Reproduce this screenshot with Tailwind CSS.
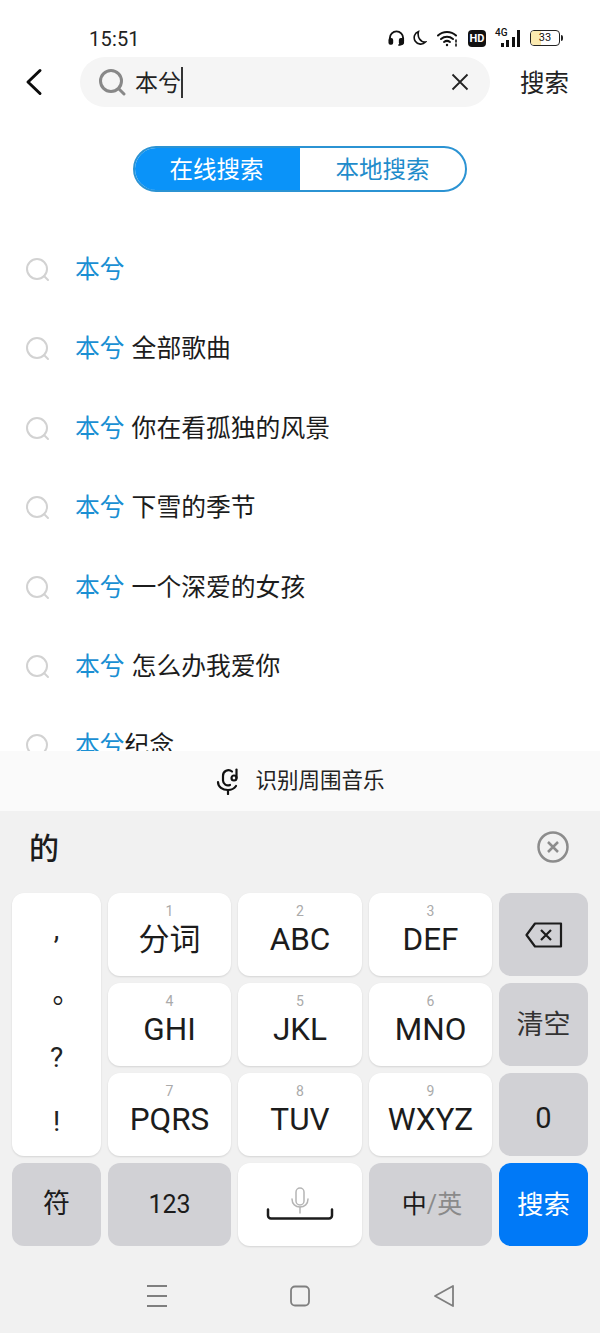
<!DOCTYPE html>
<html lang="zh-CN">
<head>
    <meta charset="UTF-8">
    <meta name="viewport" content="width=device-width, initial-scale=1.0">
    <title>搜索</title>
    <script src="https://cdn.jsdelivr.net/npm/@tailwindcss/browser@4"></script>
</head>
<body class="bg-white font-['Roboto','Noto_Sans_CJK_SC',sans-serif] text-[#1c1c1c]">
<div class="w-[600px] h-[1333px] flex flex-col overflow-hidden">

    <!-- status bar -->
    <div class="h-[57px] shrink-0 pl-[89px] pr-[37px] pt-[26px] flex items-start justify-between">
        <span class="mt-[1px] text-[20px] leading-6 tracking-[0.2px] text-[#222]">15:51</span>
        <div class="flex items-start pt-[4px]">
            <svg width="17" height="17" viewBox="0 0 18 17" fill="none" stroke="#111" stroke-width="2"><path d="M2 11V8a7 7 0 0 1 14 0v3"/><rect x="1.5" y="9" width="3" height="5" rx="1" fill="#111"/><path d="M16 11c0 3-2 4.500-5 4.500"/><rect x="12.500" y="9" width="3.500" height="5" rx="1" fill="#111"/></svg>
            <svg class="ml-[7px]" width="15" height="16" viewBox="0 0 15 16" fill="none" stroke="#111" stroke-width="1.600"><path d="M6.500 1.500a6.500 6.500 0 1 0 7 10.500C8.500 12.500 5 7 6.500 1.500z"/></svg>
            <svg class="ml-[10px]" width="22" height="17" viewBox="0 0 22 17" fill="none" stroke="#111" stroke-width="2" stroke-linecap="round"><path d="M1 5.500C6 .8 14 .8 19 5.500"/><path d="M4 9c3.500-3 8.500-3 12 0"/><path d="M7 12c2-1.500 4-1.500 6 0"/><circle cx="10" cy="15" r="1.200" fill="#111" stroke="none"/><path d="M19 10v2M19 14v2" stroke-width="1.600"/></svg>
            <div class="ml-[9px] w-[18px] h-[17px] rounded-[4px] bg-[#111] text-white text-[11px] leading-[17px] font-bold text-center">HD</div>
            <div class="ml-[9px] relative w-[25px] h-[17px]">
                <span class="absolute left-0 top-[-3px] text-[10px] leading-[11px] font-medium text-[#111]">4G</span>
                <div class="absolute right-0 bottom-0 flex items-end gap-[2.500px]">
                    <div class="w-[3px] h-[4px] bg-[#111]"></div>
                    <div class="w-[3px] h-[7px] bg-[#111]"></div>
                    <div class="w-[3px] h-[10px] bg-[#111]"></div>
                    <div class="w-[3px] h-[17px] bg-[#111]"></div>
                </div>
            </div>
            <div class="ml-[10px] flex items-center h-[16px]">
                <div class="w-[30px] h-[16px] rounded-[4px] border-[1.500px] border-[#222] overflow-hidden relative bg-white">
                    <div class="absolute inset-y-0 left-0 w-[10px] bg-[#fbeab0]"></div>
                    <div class="relative text-[11px] leading-[13px] text-center text-[#111]">33</div>
                </div>
                <div class="ml-[1px] w-[2px] h-[6px] rounded-r-sm bg-[#222]"></div>
            </div>
        </div>
    </div>

    <!-- search header -->
    <div class="h-[50px] shrink-0 flex items-center">
        <div class="w-[80px] pl-[24px] shrink-0">
            <svg width="20" height="28" viewBox="0 0 20 28" fill="none" stroke="#0c0c0c" stroke-width="3" stroke-linecap="round" stroke-linejoin="round"><path d="M16 2.500 4 14l12 11.500"/></svg>
        </div>
        <div class="w-[410px] h-[50px] shrink-0 rounded-full bg-[#f5f5f5] flex items-center pl-[18px] pr-[21px]">
            <svg width="28" height="28" viewBox="0 0 28 28" fill="none" stroke="#888" stroke-width="3" stroke-linecap="round"><circle cx="13" cy="13" r="10.500"/><path d="M21 21l5 5"/></svg>
            <span class="ml-[9px] mt-[4px] text-[23px] leading-8 text-[#222]">本兮</span>
            <div class="w-[1.500px] h-[31px] bg-[#333]"></div>
            <svg class="ml-auto" width="18" height="18" viewBox="0 0 18 18" fill="none" stroke="#222" stroke-width="1.800"><path d="M1.500 1.500l15 15M16.500 1.500l-15 15"/></svg>
        </div>
        <span class="ml-[30px] mt-[4px] text-[24.500px] leading-8 text-[#222]">搜索</span>
    </div>

    <!-- online / local tabs -->
    <div class="shrink-0 mt-[39px] flex justify-center">
        <div class="w-[334px] h-[46px] rounded-full border-2 border-[#2b93d3] flex overflow-hidden text-[23.500px]">
            <div class="w-[165px] bg-[#0a93f9] text-white flex items-center justify-center pt-[4px] pr-[2px]">在线搜索</div>
            <div class="flex-1 text-[#1f8ccb] flex items-center justify-center pt-[4px]">本地搜索</div>
        </div>
    </div>

    <!-- suggestions -->
    <div class="flex-1 min-h-0 overflow-hidden pt-[58px] px-[26px] text-[24.800px] leading-[40px] flex flex-col gap-[39.400px]">
        <div class="flex items-center">
            <svg class="shrink-0" width="24" height="24" viewBox="0 0 24 24" fill="none" stroke="#d2d2d2" stroke-width="2" stroke-linecap="round"><circle cx="11" cy="11" r="10"/><path d="M18 18l4 4"/></svg>
            <span class="ml-[25px] text-[#1a8fd3]">本兮</span>
        </div>
        <div class="flex items-center">
            <svg class="shrink-0" width="24" height="24" viewBox="0 0 24 24" fill="none" stroke="#d2d2d2" stroke-width="2" stroke-linecap="round"><circle cx="11" cy="11" r="10"/><path d="M18 18l4 4"/></svg>
            <span class="ml-[25px] text-[#1a8fd3]">本兮</span><span class="ml-[7px]">全部歌曲</span>
        </div>
        <div class="flex items-center">
            <svg class="shrink-0" width="24" height="24" viewBox="0 0 24 24" fill="none" stroke="#d2d2d2" stroke-width="2" stroke-linecap="round"><circle cx="11" cy="11" r="10"/><path d="M18 18l4 4"/></svg>
            <span class="ml-[25px] text-[#1a8fd3]">本兮</span><span class="ml-[7px]">你在看孤独的风景</span>
        </div>
        <div class="flex items-center">
            <svg class="shrink-0" width="24" height="24" viewBox="0 0 24 24" fill="none" stroke="#d2d2d2" stroke-width="2" stroke-linecap="round"><circle cx="11" cy="11" r="10"/><path d="M18 18l4 4"/></svg>
            <span class="ml-[25px] text-[#1a8fd3]">本兮</span><span class="ml-[7px]">下雪的季节</span>
        </div>
        <div class="flex items-center">
            <svg class="shrink-0" width="24" height="24" viewBox="0 0 24 24" fill="none" stroke="#d2d2d2" stroke-width="2" stroke-linecap="round"><circle cx="11" cy="11" r="10"/><path d="M18 18l4 4"/></svg>
            <span class="ml-[25px] text-[#1a8fd3]">本兮</span><span class="ml-[7px]">一个深爱的女孩</span>
        </div>
        <div class="flex items-center">
            <svg class="shrink-0" width="24" height="24" viewBox="0 0 24 24" fill="none" stroke="#d2d2d2" stroke-width="2" stroke-linecap="round"><circle cx="11" cy="11" r="10"/><path d="M18 18l4 4"/></svg>
            <span class="ml-[25px] text-[#1a8fd3]">本兮</span><span class="ml-[7px]">怎么办我爱你</span>
        </div>
        <div class="flex items-center shrink-0">
            <svg class="shrink-0" width="24" height="24" viewBox="0 0 24 24" fill="none" stroke="#d2d2d2" stroke-width="2" stroke-linecap="round"><circle cx="11" cy="11" r="10"/><path d="M18 18l4 4"/></svg>
            <span class="ml-[25px] text-[#1a8fd3]">本兮</span><span>纪念</span>
        </div>
    </div>

    <!-- recognise music bar -->
    <div class="h-[60px] shrink-0 bg-[#fafafa] flex items-center justify-center">
        <svg width="26" height="28" viewBox="0 0 26 28" fill="none" stroke="#111" stroke-width="2.200" stroke-linecap="round"><path d="M17 4.500A5.500 5.500 0 0 0 8 9v4.500a5 5 0 0 0 7 4.500"/><path d="M3 15c0 5 4.500 8 10 8 3 0 6-1 8-4"/><path d="M13 23v4"/><circle cx="19" cy="11" r="2.500"/><path d="M21.500 11V2.500"/></svg>
        <span class="ml-[14px] text-[21.500px] leading-8 text-[#222]">识别周围音乐</span>
    </div>

    <!-- keyboard -->
    <div class="h-[522px] shrink-0 bg-[#f1f1f1]">
        <div class="h-[82px] pl-[29px] pr-[31px] flex items-center justify-between">
            <span class="text-[30px] leading-[40px] font-medium text-[#1c1c1c] mt-[-7px]">的</span>
            <svg class="mt-[-11px]" width="32" height="32" viewBox="0 0 32 32" fill="none" stroke="#8c8c8c" stroke-width="2.500"><circle cx="16" cy="16" r="14.500"/><path d="M11 11l10 10M21 11L11 21"/></svg>
        </div>

        <div class="grid grid-cols-[89px_123px_124px_123px_89px] auto-rows-[83px] gap-x-[7px] gap-y-[7px] pl-[12px]">
            <div class="row-span-3 rounded-xl bg-white shadow-[0_1px_2px_rgba(0,0,0,0.12)] flex flex-col items-center pt-[17px] text-[28px] leading-[40px] gap-[24px] text-[#222]">
                <span class="h-[40px]">,</span>
                <span class="h-[40px] pl-[20px]">。</span>
                <span class="h-[40px]">?</span>
                <span class="h-[40px]">!</span>
            </div>

            <div class="rounded-xl bg-white shadow-[0_1px_2px_rgba(0,0,0,0.12)] flex flex-col items-center pt-[11px]"><span class="text-[14px] leading-[15px] text-[#aaa]">1</span><span class="text-[31px] leading-[38px] mt-[2px]">分词</span></div>
            <div class="rounded-xl bg-white shadow-[0_1px_2px_rgba(0,0,0,0.12)] flex flex-col items-center pt-[11px]"><span class="text-[14px] leading-[15px] text-[#aaa]">2</span><span class="text-[31.500px] leading-[38px] mt-[2px]">ABC</span></div>
            <div class="rounded-xl bg-white shadow-[0_1px_2px_rgba(0,0,0,0.12)] flex flex-col items-center pt-[11px]"><span class="text-[14px] leading-[15px] text-[#aaa]">3</span><span class="text-[31.500px] leading-[38px] mt-[2px]">DEF</span></div>
            <div class="rounded-xl bg-[#d1d1d5] flex items-center justify-center">
                <svg width="38" height="26" viewBox="0 0 38 26" fill="none" stroke="#1c1c1c" stroke-width="2.200" stroke-linejoin="round"><path d="M10 1.500h26v23H10L1.500 13z"/><path d="M16 8l10 10M26 8L16 18"/></svg>
            </div>

            <div class="rounded-xl bg-white shadow-[0_1px_2px_rgba(0,0,0,0.12)] flex flex-col items-center pt-[11px]"><span class="text-[14px] leading-[15px] text-[#aaa]">4</span><span class="text-[31.500px] leading-[38px] mt-[2px]">GHI</span></div>
            <div class="rounded-xl bg-white shadow-[0_1px_2px_rgba(0,0,0,0.12)] flex flex-col items-center pt-[11px]"><span class="text-[14px] leading-[15px] text-[#aaa]">5</span><span class="text-[31.500px] leading-[38px] mt-[2px]">JKL</span></div>
            <div class="rounded-xl bg-white shadow-[0_1px_2px_rgba(0,0,0,0.12)] flex flex-col items-center pt-[11px]"><span class="text-[14px] leading-[15px] text-[#aaa]">6</span><span class="text-[31.500px] leading-[38px] mt-[2px]">MNO</span></div>
            <div class="rounded-xl bg-[#d1d1d5] flex items-center justify-center text-[27px] text-[#333] pt-[2px]">清空</div>

            <div class="rounded-xl bg-white shadow-[0_1px_2px_rgba(0,0,0,0.12)] flex flex-col items-center pt-[11px]"><span class="text-[14px] leading-[15px] text-[#aaa]">7</span><span class="text-[31.500px] leading-[38px] mt-[2px]">PQRS</span></div>
            <div class="rounded-xl bg-white shadow-[0_1px_2px_rgba(0,0,0,0.12)] flex flex-col items-center pt-[11px]"><span class="text-[14px] leading-[15px] text-[#aaa]">8</span><span class="text-[31.500px] leading-[38px] mt-[2px]">TUV</span></div>
            <div class="rounded-xl bg-white shadow-[0_1px_2px_rgba(0,0,0,0.12)] flex flex-col items-center pt-[11px]"><span class="text-[14px] leading-[15px] text-[#aaa]">9</span><span class="text-[31.500px] leading-[38px] mt-[2px]">WXYZ</span></div>
            <div class="rounded-xl bg-[#d1d1d5] flex items-center justify-center text-[29px] pt-[8px]">0</div>

            <div class="rounded-xl bg-[#d1d1d5] flex items-center justify-center text-[27px]">符</div>
            <div class="rounded-xl bg-[#d1d1d5] flex items-center justify-center text-[25px]">123</div>
            <div class="rounded-xl bg-white shadow-[0_1px_2px_rgba(0,0,0,0.12)] flex flex-col items-center pt-[24px]">
                <svg width="20" height="28" viewBox="0 0 20 28" fill="none" stroke="#b5b5b5" stroke-width="1.500" stroke-linecap="round"><rect x="6" y="1" width="8" height="17" rx="4"/><path d="M2 12c0 5 3.500 8 8 8s8-3 8-8"/><path d="M10 20v6"/></svg>
                <svg class="-mt-[7px]" width="68" height="12" viewBox="0 0 68 12" fill="none" stroke="#1c1c1c" stroke-width="2.500" stroke-linecap="round" stroke-linejoin="round"><path d="M2 1.500v6a3 3 0 0 0 3 3h58a3 3 0 0 0 3-3v-6"/></svg>
            </div>
            <div class="rounded-xl bg-[#d1d1d5] flex items-center justify-center text-[25px] pl-[3px]"><span>中</span><span class="text-[#8a8a8a]">/英</span></div>
            <div class="rounded-xl bg-[#0079f7] text-white flex items-center justify-center text-[26.500px]">搜索</div>
        </div>

        <!-- nav bar -->
        <div class="mt-[38px] pl-[146px] flex items-center">
            <svg width="22" height="24" viewBox="0 0 22 24" fill="none" stroke="#7f7f7f" stroke-width="1.800"><path d="M1 2h20M1 12h20M1 22h20"/></svg>
            <svg class="ml-[121px]" width="22" height="24" viewBox="0 0 22 24" fill="none" stroke="#7f7f7f" stroke-width="1.800"><rect x="2" y="2.500" width="18" height="19" rx="4"/></svg>
            <svg class="ml-[122px]" width="22" height="24" viewBox="0 0 22 24" fill="none" stroke="#7f7f7f" stroke-width="1.800" stroke-linejoin="round"><path d="M20 2 2 12l18 10z"/></svg>
        </div>
    </div>
</div>
</body>
</html>
